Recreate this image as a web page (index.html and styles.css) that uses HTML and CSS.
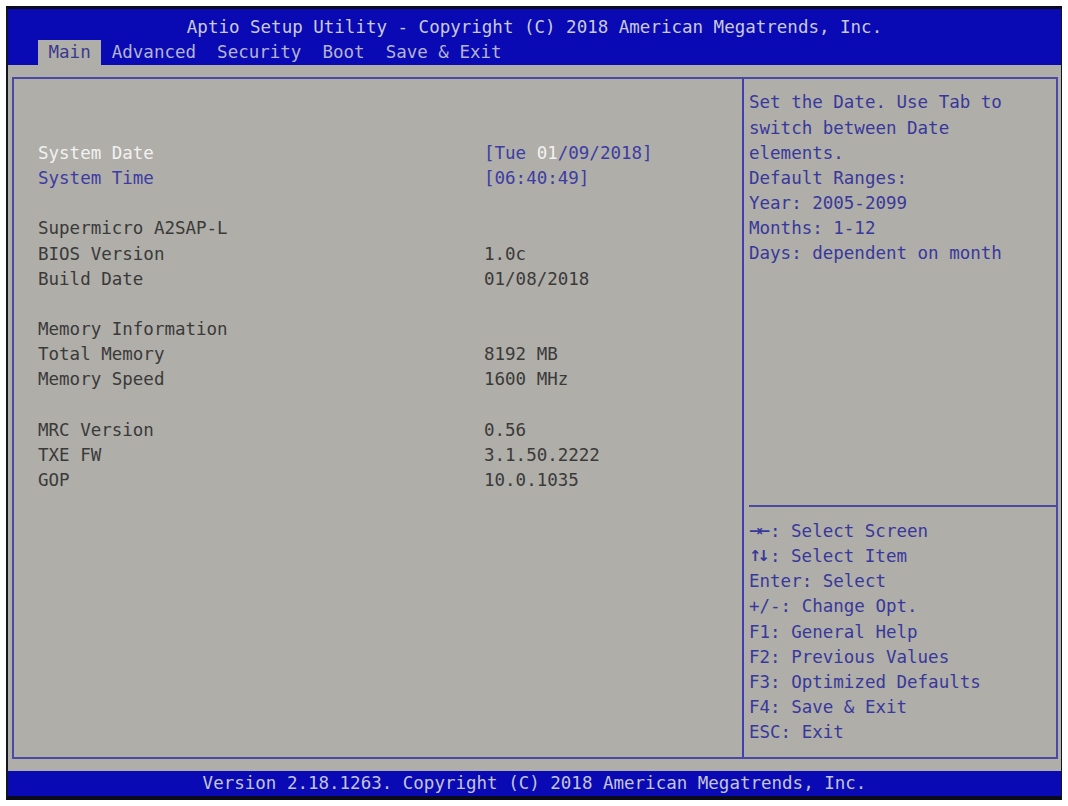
FILE: index.html
```html
<!DOCTYPE html>
<html lang="en">
<head>
<meta charset="utf-8">
<title>Aptio Setup Utility</title>
<link rel="stylesheet" href="styles.css">
</head>
<body>
<div class="screen">
  <header class="header">
    <div class="title">Aptio Setup Utility - Copyright (C) 2018 American Megatrends, Inc.</div>
    <nav class="tabs">
      <span class="tab active">Main</span>
      <span class="tab">Advanced</span>
      <span class="tab">Security</span>
      <span class="tab">Boot</span>
      <span class="tab">Save &amp; Exit</span>
    </nav>
  </header>
  <main class="body">
    <div class="panel">
      <section class="left">
        <div class="group first">
          <div class="row"><span class="label selected">System Date</span><span class="value link">[Tue <span class="hl">01</span>/09/2018]</span></div>
          <div class="row"><span class="label link">System Time</span><span class="value link">[06:40:49]</span></div>
        </div>
        <div class="group">
          <div class="row"><span class="label">Supermicro A2SAP-L</span><span class="value"></span></div>
          <div class="row"><span class="label">BIOS Version</span><span class="value">1.0c</span></div>
          <div class="row"><span class="label">Build Date</span><span class="value">01/08/2018</span></div>
        </div>
        <div class="group">
          <div class="row"><span class="label">Memory Information</span><span class="value"></span></div>
          <div class="row"><span class="label">Total Memory</span><span class="value">8192 MB</span></div>
          <div class="row"><span class="label">Memory Speed</span><span class="value">1600 MHz</span></div>
        </div>
        <div class="group">
          <div class="row"><span class="label">MRC Version</span><span class="value">0.56</span></div>
          <div class="row"><span class="label">TXE FW</span><span class="value">3.1.50.2222</span></div>
          <div class="row"><span class="label">GOP</span><span class="value">10.0.1035</span></div>
        </div>
      </section>
      <aside class="right">
        <div class="help">
          <div class="line">Set the Date. Use Tab to</div>
          <div class="line">switch between Date</div>
          <div class="line">elements.</div>
          <div class="line">Default Ranges:</div>
          <div class="line">Year: 2005-2099</div>
          <div class="line">Months: 1-12</div>
          <div class="line">Days: dependent on month</div>
        </div>
        <div class="keys">
          <div class="line"><span class="arrows">→←</span>: Select Screen</div>
          <div class="line"><span class="arrows">↑↓</span>: Select Item</div>
          <div class="line">Enter: Select</div>
          <div class="line">+/-: Change Opt.</div>
          <div class="line">F1: General Help</div>
          <div class="line">F2: Previous Values</div>
          <div class="line">F3: Optimized Defaults</div>
          <div class="line">F4: Save &amp; Exit</div>
          <div class="line">ESC: Exit</div>
        </div>
      </aside>
    </div>
  </main>
  <footer class="footer">Version 2.18.1263. Copyright (C) 2018 American Megatrends, Inc.</footer>
</div>
</body>
</html>
```

FILE: styles.css
```css
* { box-sizing: border-box; }

html, body {
  margin: 0;
  padding: 0;
  background: #ffffff;
}

body {
  font-family: "DejaVu Sans Mono", "Liberation Mono", monospace;
  font-size: 17.5px;
  line-height: 25.2px;
}

.screen {
  margin: 6px 0 0 6px;
  width: 1056px;
  border-top: 3px solid #0b0b1e;
  border-left: 2px solid #15151f;
  border-right: 1px solid #15151f;
  border-bottom: 4px solid #0b0b1e;
  display: flex;
  flex-direction: column;
}

.header {
  background: #0a0ab4;
  padding-top: 5.8px;
}

.title {
  height: 25.2px;
  text-align: center;
  color: #c9c9dc;
  white-space: nowrap;
}

.tabs {
  display: flex;
  height: 25.2px;
  padding-left: 30px;
  color: #b4b4d0;
  white-space: nowrap;
}

.tab {
  padding: 0 1ch;
}

.tab.active {
  background: #b0aea8;
  color: #3a3a8e;
}

.body {
  background: #b0aea8;
  height: 705.6px;
  padding: 11.8px 3px 11.8px 4px;
}

.panel {
  height: 682px;
  border: 2px solid #4a4aa6;
  display: flex;
}

.left {
  width: 730px;
  border-right: 2px solid #3f3fb2;
  padding: 11.4px 0 0 24px;
  color: #3a3a3a;
}

.group {
  margin-top: 25.2px;
}

.group.first {
  margin-top: 50.4px;
}

.row {
  display: grid;
  grid-template-columns: 446px auto;
  height: 25.2px;
  white-space: nowrap;
}

.link {
  color: #3c3ca4;
}

.selected {
  color: #f2f2f2;
}

.hl {
  color: #f2f2f2;
}

.right {
  flex: 1;
  display: flex;
  flex-direction: column;
  justify-content: space-between;
  padding: 11.4px 0 11.4px 5px;
  color: #38389c;
}

.line {
  height: 25.2px;
  white-space: nowrap;
}

.arrows {
  display: inline-block;
  width: 21px;
  overflow: hidden;
  font-family: "DejaVu Sans", sans-serif;
  font-weight: bold;
  font-size: 15px;
  letter-spacing: -4px;
  vertical-align: top;
}

.keys {
  border-top: 2px solid #4a4aa6;
  padding-top: 11.6px;
}

.footer {
  background: #0a0ab4;
  height: 25.2px;
  text-align: center;
  color: #c4c4d8;
  white-space: nowrap;
}
```
